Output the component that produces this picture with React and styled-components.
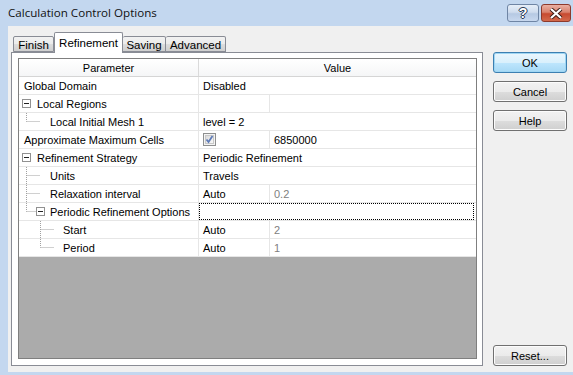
import React from 'react';
import styled, { createGlobalStyle } from 'styled-components';

const GlobalStyle = createGlobalStyle`
  html, body, #root { margin: 0; padding: 0; width: 100%; height: 100%; }
  body {
    overflow: hidden;
    font-family: "Liberation Sans", Arial, sans-serif;
    font-size: 11px;
    color: #000;
  }
`;

const rows = [
  { label: 'Global Domain', depth: 0, value: 'Disabled' },
  { label: 'Local Regions', depth: 0, box: true, split: true },
  { label: 'Local Initial Mesh 1', depth: 1, last: true, value: 'level = 2' },
  { label: 'Approximate Maximum Cells', depth: 0, split: true, check: true, value2: '6850000', dark2: true },
  { label: 'Refinement Strategy', depth: 0, box: true, value: 'Periodic Refinement' },
  { label: 'Units', depth: 1, value: 'Travels' },
  { label: 'Relaxation interval', depth: 1, split: true, value: 'Auto', value2: '0.2' },
  { label: 'Periodic Refinement Options', depth: 1, box: true, last: true, focus: true },
  { label: 'Start', depth: 2, split: true, value: 'Auto', value2: '2' },
  { label: 'Period', depth: 2, last: true, split: true, value: 'Auto', value2: '1' },
];

const tabs = [
  { name: 'Finish', width: 41 },
  { name: 'Refinement', width: 69, active: true },
  { name: 'Saving', width: 43 },
  { name: 'Advanced', width: 60 },
];

const textOffset = (r) => {
  if (r.depth === 0) return r.box ? 18 : 5;
  return r.depth === 1 ? 31 : 44;
};

const Gutter = ({ row }) => {
  const w = textOffset(row);
  const mid = 8.5;
  const parts = [];
  if (row.depth > 0) {
    const px = 7 + 14 * (row.depth - 1) + 0.5;
    parts.push(<line key="v" x1={px} y1={0} x2={px} y2={row.last ? mid : 17} />);
    parts.push(<line key="h" x1={px} y1={mid} x2={row.box ? px + 9 : px + 13} y2={mid} />);
  }
  const bx = 7 + 14 * row.depth;
  return (
    <svg width={w} height={17} style={{ flex: 'none' }}>
      <g stroke="#a0a0a0" strokeDasharray="1 1" fill="none">{parts}</g>
      {row.box && (
        <g>
          <rect x={bx - 4 + 0.5} y={4.5} width={8} height={8} fill="#fff" stroke="#919191" />
          <line x1={bx - 2} y1={8.5} x2={bx + 3} y2={8.5} stroke="#222" />
        </g>
      )}
    </svg>
  );
};

const CheckMark = () => (
  <svg width={13} height={13}>
    <defs>
      <linearGradient id="cbg" x1="0" y1="0" x2="1" y2="1">
        <stop offset="0" stopColor="#d8d8d8" />
        <stop offset="1" stopColor="#fbfbfb" />
      </linearGradient>
    </defs>
    <rect x={0.5} y={0.5} width={12} height={12} fill="#f4f4f4" stroke="#8e8f8f" />
    <rect x={2.5} y={2.5} width={8} height={8} fill="url(#cbg)" stroke="#c8c8c8" />
    <path d="M3.5 6.5 L5.5 9 L9.5 3" stroke="#5f7cb8" strokeWidth={1.8} fill="none" />
  </svg>
);

export default function App() {
  return (
    <>
      <GlobalStyle />
      <Window>
        <TitleBar>
          <Title>Calculation Control Options</Title>
          <CaptionButtons>
            <CaptionButton>?</CaptionButton>
            <CaptionButton $close>
              <svg width={14} height={11}>
                <path d="M2 1 L12 10 M12 1 L2 10" stroke="#3a1a14" strokeWidth={4} />
                <path d="M2 1 L12 10 M12 1 L2 10" stroke="#fff" strokeWidth={2.2} />
              </svg>
            </CaptionButton>
          </CaptionButtons>
        </TitleBar>
        <Body>
          <LeftColumn>
            <TabStrip>
              {tabs.map((t) => (
                <Tab key={t.name} $active={t.active} $width={t.width}>{t.name}</Tab>
              ))}
            </TabStrip>
            <TabPanel>
              <PropGrid>
                <HeaderRow>
                  <HeaderCell>Parameter</HeaderCell>
                  <HeaderCell>Value</HeaderCell>
                </HeaderRow>
                {rows.map((r) => (
                  <Row key={r.label}>
                    <LabelCell>
                      <Gutter row={r} />
                      <span>{r.label}</span>
                    </LabelCell>
                    {r.focus ? (
                      <ValueCell>
                        <FocusBox />
                      </ValueCell>
                    ) : r.split ? (
                      <ValueCell>
                        <SubCell>{r.check ? <CheckMark /> : r.value}</SubCell>
                        <SubCell $grow $muted={!r.dark2}>{r.value2}</SubCell>
                      </ValueCell>
                    ) : (
                      <ValueCell>
                        <SubCell $grow>{r.value}</SubCell>
                      </ValueCell>
                    )}
                  </Row>
                ))}
                <EmptyArea />
              </PropGrid>
            </TabPanel>
          </LeftColumn>
          <ButtonColumn>
            <DialogButton $default>OK</DialogButton>
            <DialogButton>Cancel</DialogButton>
            <DialogButton>Help</DialogButton>
            <Spacer />
            <DialogButton>Reset...</DialogButton>
          </ButtonColumn>
        </Body>
      </Window>
    </>
  );
}

const Window = styled.div`
  width: 573px;
  height: 375px;
  background: #c3d7ef;
  display: flex;
  flex-direction: column;
  box-sizing: border-box;
  padding: 0 0 3px 8px;
`;

const TitleBar = styled.div`
  height: 26px;
  flex: none;
  display: flex;
  align-items: center;
  justify-content: space-between;
  padding-right: 2px;
`;

const Title = styled.div`
  font-family: "Open Sans", "Noto Sans", sans-serif;
  font-size: 11.6px;
  color: #111;
  margin-top: -2px;
`;

const CaptionButtons = styled.div`
  display: flex;
  gap: 2px;
  align-self: flex-start;
  margin-top: 4px;
`;

const CaptionButton = styled.div`
  width: ${(p) => (p.$close ? 30 : 32)}px;
  height: 18px;
  box-sizing: border-box;
  border: 1px solid ${(p) => (p.$close ? '#8d3a2c' : '#6f85a4')};
  border-radius: 3px;
  background: ${(p) =>
    p.$close
      ? 'linear-gradient(#eab0a2 0%, #d9826d 45%, #c74a30 55%, #d36a4c 100%)'
      : 'linear-gradient(#e6eef8 0%, #cfdcee 45%, #b6c9e3 55%, #c8d8ee 100%)'};
  display: flex;
  align-items: center;
  justify-content: center;
  color: #fff;
  font-weight: bold;
  font-size: 14px;
  text-shadow: 0 0 1px #2a3a55, 1px 0 0 #2a3a55, -1px 0 0 #2a3a55, 0 1px 0 #2a3a55, 0 -1px 0 #2a3a55;
`;

const Body = styled.div`
  flex: 1;
  display: flex;
  background: #f0f0f0;
  padding: 6px 6px 6px 3px;
  min-height: 0;
`;

const LeftColumn = styled.div`
  width: 472px;
  flex: none;
  display: flex;
  flex-direction: column;
`;

const TabStrip = styled.div`
  height: 21px;
  display: flex;
  align-items: flex-end;
  padding-left: 2px;
  margin-bottom: -1px;
  position: relative;
  z-index: 1;
`;

const Tab = styled.div`
  box-sizing: border-box;
  flex: none;
  width: ${(p) => p.$width}px;
  height: ${(p) => (p.$active ? 21 : 16)}px;
  padding-top: ${(p) => (p.$active ? 3 : 1)}px;
  margin-bottom: ${(p) => (p.$active ? 0 : 1)}px;
  border: 1px solid #898c95;
  border-bottom: ${(p) => (p.$active ? 'none' : '1px solid #898c95')};
  border-left-width: ${(p) => (p.$active ? 1 : 0)}px;
  border-radius: 2px 2px 0 0;
  background: ${(p) =>
    p.$active ? '#fff' : 'linear-gradient(#f2f2f2 0%, #ebebeb 50%, #dddddd 51%, #cfcfcf 100%)'};
  font-size: 11.5px;
  line-height: 14px;
  text-align: center;
  white-space: nowrap;
  &:first-child { border-left-width: 1px; }
`;

const TabPanel = styled.div`
  flex: 1;
  border: 1px solid #898c95;
  background: #fff;
  padding: 5px 5px 6px 6px;
  display: flex;
  flex-direction: column;
`;

const PropGrid = styled.div`
  flex: 1;
  display: flex;
  flex-direction: column;
  border: 1px solid #7f7f7f;
  background: #ababab;
`;

const HeaderRow = styled.div`
  display: grid;
  grid-template-columns: 180px 1fr;
  height: 18px;
  box-sizing: border-box;
  border-bottom: 1px solid #d5d5d5;
  background: linear-gradient(#ffffff, #f5f6f7);
`;

const HeaderCell = styled.div`
  display: flex;
  align-items: center;
  justify-content: center;
  &:first-child { border-right: 1px solid #dadada; }
`;

const Row = styled.div`
  display: grid;
  grid-template-columns: 180px 1fr;
  height: 18px;
  box-sizing: border-box;
  border-bottom: 1px solid #e6e6e6;
  background: #fff;
`;

const LabelCell = styled.div`
  display: flex;
  align-items: center;
  border-right: 1px solid #e6e6e6;
  white-space: nowrap;
  overflow: hidden;
`;

const ValueCell = styled.div`
  display: flex;
  align-items: stretch;
  min-width: 0;
`;

const SubCell = styled.div`
  box-sizing: border-box;
  width: ${(p) => (p.$grow ? 'auto' : '71px')};
  flex: ${(p) => (p.$grow ? 1 : 'none')};
  display: flex;
  align-items: center;
  padding-left: 4px;
  border-right: ${(p) => (p.$grow ? 'none' : '1px solid #e6e6e6')};
  color: ${(p) => (p.$muted ? '#808080' : '#000')};
`;

const FocusBox = styled.div`
  flex: 1;
  margin: 0 2px 0 0;
  border: 1px dotted #000;
`;

const EmptyArea = styled.div`
  flex: 1;
`;

const ButtonColumn = styled.div`
  width: 74px;
  margin-left: 10px;
  padding-top: 20px;
  display: flex;
  flex-direction: column;
  gap: 8px;
`;

const Spacer = styled.div`
  flex: 1;
`;

const DialogButton = styled.div`
  height: 21px;
  box-sizing: border-box;
  border: 1px solid ${(p) => (p.$default ? '#3c7fb1' : '#707070')};
  border-radius: 3px;
  background: ${(p) =>
    p.$default
      ? 'linear-gradient(#eaf6fd 0%, #d9f0fc 50%, #bee6fd 51%, #a7d9f5 100%)'
      : 'linear-gradient(#f2f2f2 0%, #ebebeb 50%, #dddddd 51%, #cfcfcf 100%)'};
  box-shadow: inset 0 0 0 1px ${(p) => (p.$default ? '#9fd6f3' : '#fcfcfc')};
  display: flex;
  align-items: center;
  justify-content: center;
  font-size: 11px;
`;
